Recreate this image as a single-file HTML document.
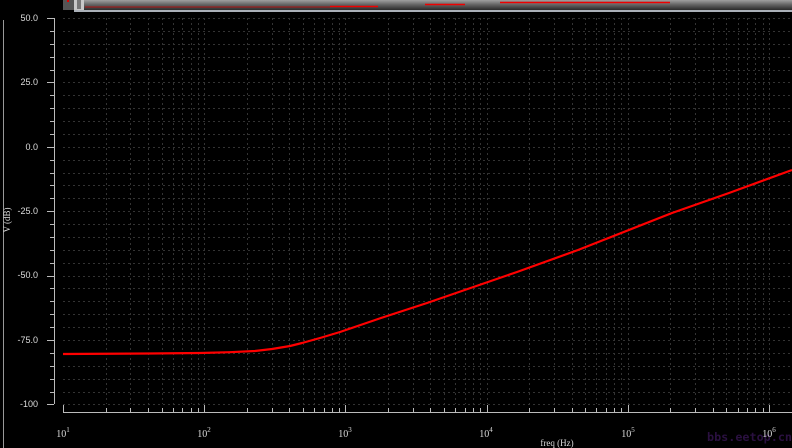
<!DOCTYPE html>
<html><head><style>
html,body{margin:0;padding:0;background:#000;width:792px;height:448px;overflow:hidden}
svg{display:block}
</style></head><body>
<svg width="792" height="448" xmlns="http://www.w3.org/2000/svg">
<defs>
<linearGradient id="g" x1="0" y1="0" x2="0" y2="1">
<stop offset="0" stop-color="#a0a0a0"/><stop offset="0.5" stop-color="#606060"/><stop offset="1" stop-color="#2a2a2a"/>
</linearGradient>
</defs>
<rect width="792" height="448" fill="#000"/>
<rect x="63" y="0" width="729" height="10" fill="url(#g)"/>
<rect x="63" y="0" width="11" height="10" fill="#555"/>
<rect x="67" y="0" width="2" height="2" fill="#d00"/>
<rect x="74" y="0" width="10" height="11" fill="#c8c8c8"/>
<rect x="77" y="0" width="4" height="9" fill="#777"/>
<rect x="74" y="10" width="718" height="2" fill="#aab0b8"/>
<line x1="85" y1="7" x2="330" y2="7" stroke="#c00" stroke-width="0.7"/>
<line x1="330" y1="6.5" x2="378" y2="6.5" stroke="#e00" stroke-width="1.5"/>
<line x1="425" y1="4.5" x2="465" y2="4.5" stroke="#e00" stroke-width="1.5"/>
<line x1="500" y1="2.5" x2="670" y2="2.5" stroke="#e00" stroke-width="1.5"/>
<line x1="3.5" y1="20" x2="3.5" y2="448" stroke="#999" stroke-width="1"/>
<g id="grid" stroke="#333" stroke-width="1" stroke-dasharray="2,3" fill="none"></g>
<g id="ax" stroke="#bbb" stroke-width="1" fill="none"></g>
<text x="10" y="220" transform="rotate(-90 10 220)" fill="#ddd" font-family="Liberation Serif, serif" font-size="9" text-anchor="middle">V (dB)</text>
<g fill="#ddd" font-family="Liberation Sans, sans-serif" font-size="9" text-anchor="end">
<text x="38" y="21">50.0</text>
<text x="38" y="85">25.0</text>
<text x="38" y="150">0.0</text>
<text x="38" y="214">-25.0</text>
<text x="38" y="278">-50.0</text>
<text x="38" y="343">-75.0</text>
<text x="38" y="407">-100</text>
</g>
<g fill="#ddd" font-family="Liberation Serif, serif" font-size="10" text-anchor="middle">
<text x="63" y="437">10<tspan font-size="7" dy="-5">1</tspan></text>
<text x="204" y="437">10<tspan font-size="7" dy="-5">2</tspan></text>
<text x="345" y="437">10<tspan font-size="7" dy="-5">3</tspan></text>
<text x="486" y="437">10<tspan font-size="7" dy="-5">4</tspan></text>
<text x="628" y="437">10<tspan font-size="7" dy="-5">5</tspan></text>
<text x="557" y="446" font-size="9">freq (Hz)</text>
</g>
<text x="707" y="441" fill="#2a1040" font-family="DejaVu Sans Mono, monospace" font-weight="bold" font-size="11.5" textLength="85" lengthAdjust="spacingAndGlyphs">bbs.eetop.cn</text>
<text x="769" y="437" fill="#ddd" font-family="Liberation Serif, serif" font-size="10" text-anchor="middle">10<tspan font-size="7" dy="-5">6</tspan></text>
<polyline fill="none" stroke="#f00" stroke-width="2.2" stroke-linejoin="round"
points="63,354 150,353.5 200,353 230,352.2 255,351 272,349 290,346 302,343 320,338 340,332 381,318 427,303 517,272 578,250 672,213 729,193 792,170"/>
</svg>
<script>
(function(){
var ns="http://www.w3.org/2000/svg";
var grid=document.getElementById("grid"),ax=document.getElementById("ax");
function L(p,x1,y1,x2,y2){var l=document.createElementNS(ns,"line");l.setAttribute("x1",x1);l.setAttribute("y1",y1);l.setAttribute("x2",x2);l.setAttribute("y2",y2);p.appendChild(l);}
var x0=63,dec=141.2,y0=18,ystep=12.88;
for(var i=0;i<=30;i++){var y=Math.round(y0+i*ystep)+0.5;L(grid,63,y,792,y);
 var len=(i%5==0)?7:4;L(ax,54-len,y,54,y);}
L(ax,54.5,18,54.5,404);
for(var d=0;d<6;d++){for(var k=1;k<=10;k++){var x=x0+dec*(d+Math.log10(k));if(x>792)break;var xr=Math.round(x)+0.5;
 if(!(k==1&&d==0))L(grid,xr,18,xr,404);
 var len=(k==1||k==10)?7:4;L(ax,xr,412-len,xr,412);}}
L(ax,63,412.5,792,412.5);
})();
</script>
</body></html>
